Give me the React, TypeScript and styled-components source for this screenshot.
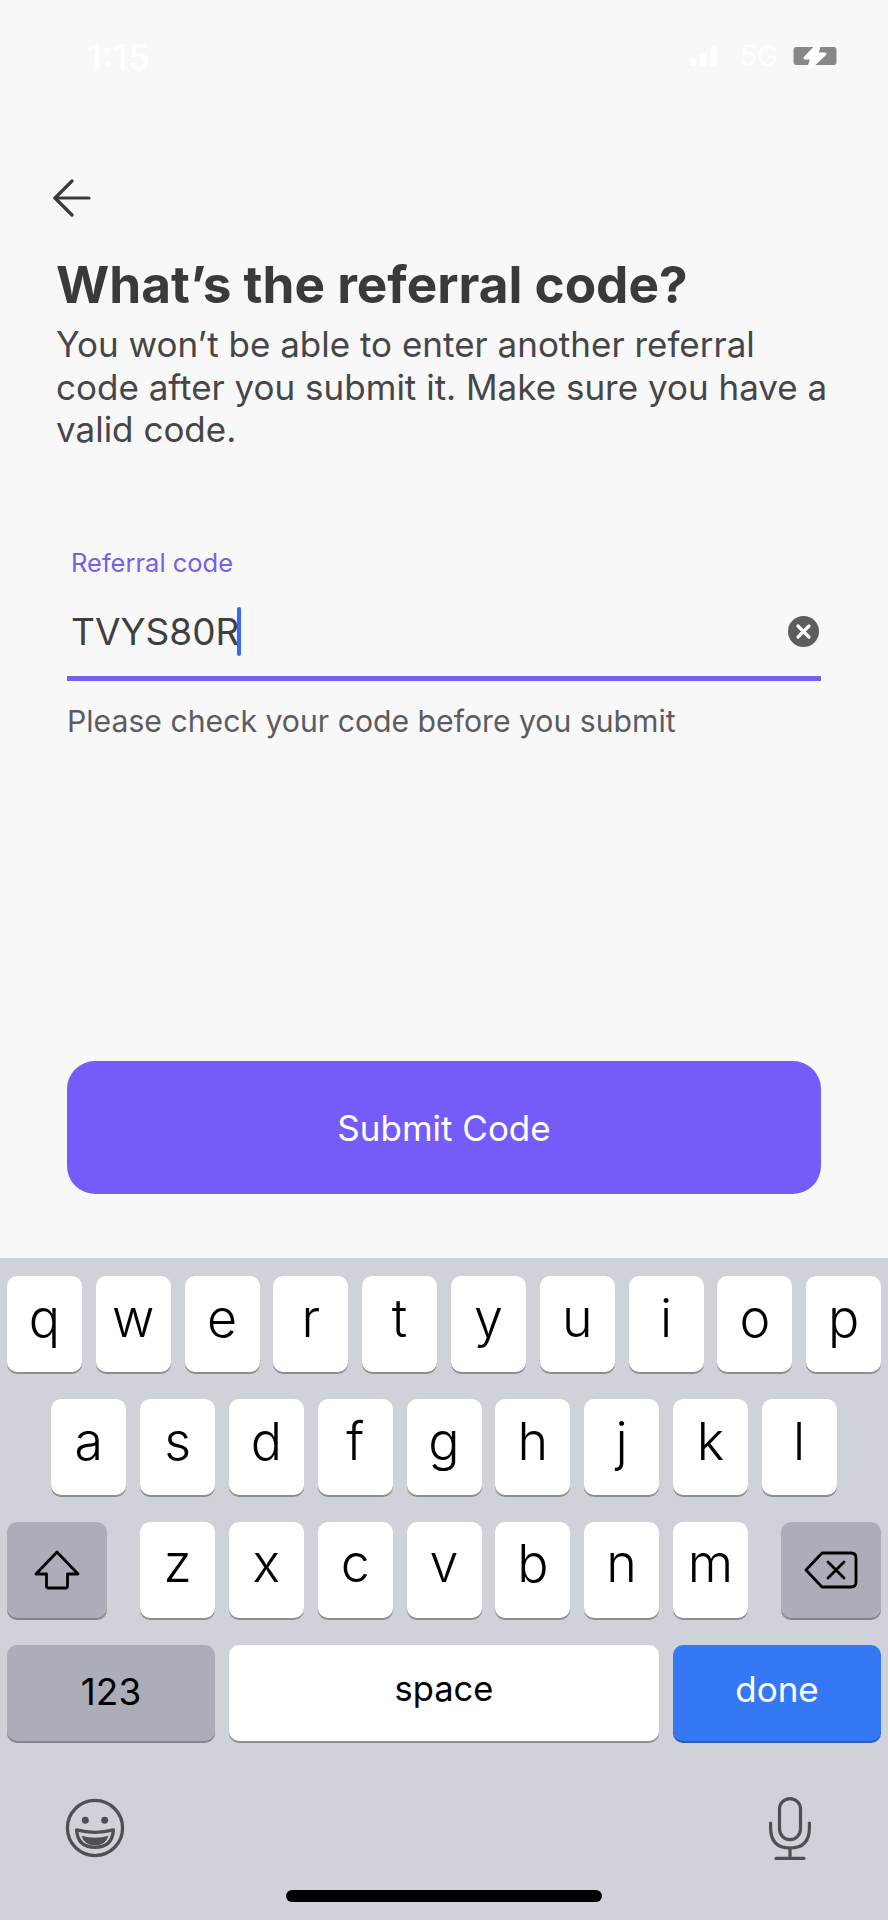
import React from "react";
import styled, { createGlobalStyle } from "styled-components";

const Global = createGlobalStyle`
  html, body { margin: 0; padding: 0; background: #f8f8f9; }
  * { box-sizing: border-box; }
`;

const Page = styled.div`
  width: 888px;
  height: 1920px;
  display: flex;
  flex-direction: column;
  overflow: hidden;
  background: #f8f8f9;
  font-family: Inter, "Liberation Sans", sans-serif;
`;

const StatusBar = styled.div`
  height: 112px;
  padding: 36px 51px 0 87px;
  display: flex;
  justify-content: space-between;
  align-items: flex-start;
  color: #ffffff;
`;
const Time = styled.span`
  font-size: 36px;
  line-height: 42px;
  font-weight: 500;
`;
const StatusIcons = styled.div`
  display: flex;
  align-items: center;
  gap: 20px;
  height: 40px;
`;
const NetLabel = styled.span`
  margin-right: -5px;
  font-size: 28px;
  font-weight: 400;
  line-height: 40px;
`;

const Main = styled.main`
  flex: 1;
  display: flex;
  flex-direction: column;
  padding: 67px 67px 64px;
`;
const BackButton = styled.div`
  margin-left: -14px;
  height: 38px;
  display: flex;
`;
const Title = styled.h1`
  margin: 36.5px 0 0 -11px;
  font-size: 51.3px;
  line-height: 60px;
  font-weight: 700;
  color: #3a3a3c;
  white-space: nowrap;
`;
const Subtitle = styled.p`
  margin: 9.5px 0 0 -11px;
  width: 778px;
  font-size: 35px;
  line-height: 42.5px;
  font-weight: 400;
  color: #464648;
`;
const Field = styled.div`
  margin-top: 97px;
`;
const FieldLabel = styled.div`
  padding-left: 4px;
  font-size: 25.5px;
  line-height: 29px;
  color: #7560e6;
`;
const InputRow = styled.div`
  margin-top: 19px;
  height: 85.3px;
  border-bottom: 5px solid #7561e8;
  padding: 0 2px 8px 4px;
  display: flex;
  align-items: center;
  justify-content: space-between;
`;
const InputValue = styled.div`
  display: flex;
  align-items: center;
  font-size: 37px;
  line-height: 48px;
  color: #3f3f41;
`;
const Caret = styled.span`
  width: 4px;
  height: 49px;
  margin-left: -2px;
  border-radius: 2px;
  background: #3b68f2;
`;
const Helper = styled.div`
  margin-top: 22px;
  font-size: 30.2px;
  line-height: 36px;
  color: #5c5c60;
`;
const Submit = styled.div`
  margin-top: auto;
  height: 133px;
  border-radius: 28px;
  background: #755cf8;
  color: #ffffff;
  font-size: 35px;
  display: flex;
  align-items: center;
  justify-content: center;
`;

const Keyboard = styled.div`
  height: 662px;
  background: #d0d2d9;
  padding: 18px 7px 0;
  display: flex;
  flex-direction: column;
  gap: 27px;
  position: relative;
  font-family: Inter, "Liberation Sans", sans-serif;
`;
const KeyRow = styled.div<{ $justify?: string }>`
  display: flex;
  height: 96px;
  gap: 13.8px;
  justify-content: ${(p) => p.$justify ?? "center"};
`;
const Letters = styled.div`
  display: flex;
  gap: 13.8px;
`;
const Key = styled.div<{ $w?: number; $bg?: string; $shadow?: string; $color?: string; $size?: number; $pb?: number; $weight?: number }>`
  width: ${(p) => p.$w ?? 75}px;
  height: 96px;
  flex: none;
  border-radius: 10px;
  background: ${(p) => p.$bg ?? "#ffffff"};
  box-shadow: 0 2px 0 ${(p) => p.$shadow ?? "#8d8e92"};
  color: ${(p) => p.$color ?? "#000000"};
  font-size: ${(p) => p.$size ?? 52}px;
  font-weight: ${(p) => p.$weight ?? 350};
  line-height: 1;
  display: flex;
  align-items: center;
  justify-content: center;
  padding-bottom: ${(p) => p.$pb ?? 10}px;
`;
const Accessory = styled.div`
  position: absolute;
  left: 0;
  right: 0;
  top: 538px;
  height: 64px;
  padding: 0 77px 0 65px;
  display: flex;
  align-items: center;
  justify-content: space-between;
`;
const HomeBar = styled.div`
  position: absolute;
  left: 286px;
  top: 632px;
  width: 316px;
  height: 12px;
  border-radius: 6px;
  background: #000000;
`;

const row1 = "qwertyuiop".split("");
const row2 = "asdfghjkl".split("");
const row3 = "zxcvbnm".split("");

export default function App() {
  return (
    <Page>
      <Global />
      <StatusBar>
        <Time>1:15</Time>
        <StatusIcons>
          <svg width="30" height="20" viewBox="0 0 30 20">
            <rect x="0" y="12" width="6" height="8" rx="1.5" fill="#fff" />
            <rect x="10" y="7" width="6" height="13" rx="1.5" fill="#fff" />
            <rect x="21" y="0" width="6" height="20" rx="1.5" fill="#fff" />
          </svg>
          <NetLabel>5G</NetLabel>
          <svg width="44" height="28" viewBox="0 0 44 28">
            <rect x="0.5" y="5" width="43" height="18" rx="3" fill="#888888" />
            <path d="M27 0 L12 16 H19 L15 28 L32 12 H24 Z" fill="#ffffff" stroke="#ffffff" strokeWidth="3" strokeLinejoin="round" />
          </svg>
        </StatusIcons>
      </StatusBar>
      <Main>
        <BackButton>
          <svg width="38" height="38" viewBox="0 0 38 38" fill="none" stroke="#3a3a3c" strokeWidth="3.2" strokeLinecap="round" strokeLinejoin="round">
            <path d="M36 19 H2" />
            <path d="M19 2 L2 19 L19 36" />
          </svg>
        </BackButton>
        <Title>What’s the referral code?</Title>
        <Subtitle>
          You won’t be able to enter another referral code after you submit it. Make sure you have a valid code.
        </Subtitle>
        <Field>
          <FieldLabel>Referral code</FieldLabel>
          <InputRow>
            <InputValue>
              TVYS80R
              <Caret />
            </InputValue>
            <svg width="31" height="31" viewBox="0 0 31 31">
              <circle cx="15.5" cy="15.5" r="15.5" fill="#5d5d60" />
              <path d="M10 10 L21 21 M21 10 L10 21" stroke="#ffffff" strokeWidth="3.2" strokeLinecap="round" />
            </svg>
          </InputRow>
          <Helper>Please check your code before you submit</Helper>
        </Field>
        <Submit>Submit Code</Submit>
      </Main>
      <Keyboard>
        <KeyRow>
          {row1.map((k) => (
            <Key key={k}>{k}</Key>
          ))}
        </KeyRow>
        <KeyRow>
          {row2.map((k) => (
            <Key key={k}>{k}</Key>
          ))}
        </KeyRow>
        <KeyRow $justify="space-between">
          <Key $w={100} $bg="#abaeb8" $shadow="#85868c" $pb={1}>
            <svg width="46" height="40" viewBox="0 0 46 40" fill="none" stroke="#000" strokeWidth="2.8" strokeLinejoin="round">
              <path d="M23 2 L44 24 H33.5 V36 Q33.5 38 31.5 38 H14.5 Q12.5 38 12.5 36 V24 H2 Z" />
            </svg>
          </Key>
          <Letters>
            {row3.map((k) => (
              <Key key={k} $pb={12}>{k}</Key>
            ))}
          </Letters>
          <Key $w={100} $bg="#abaeb8" $shadow="#85868c" $pb={1}>
            <svg width="54" height="38" viewBox="0 0 54 38" fill="none" stroke="#000" strokeWidth="2.8" strokeLinejoin="round" strokeLinecap="round">
              <path d="M18 2 H47 Q52 2 52 7 V31 Q52 36 47 36 H18 L2 19 Z" />
              <path d="M24 11 L40 27 M40 11 L24 27" />
            </svg>
          </Key>
        </KeyRow>
        <KeyRow $justify="space-between">
          <Key $w={208} $bg="#abaeb8" $shadow="#85868c" $size={37} $pb={3} $weight={400}>123</Key>
          <Key $w={430} $size={34.5} $pb={7} $weight={400}>space</Key>
          <Key $w={208} $bg="#3478f6" $shadow="#2a5cb8" $color="#ffffff" $size={35} $pb={7} $weight={400}>done</Key>
        </KeyRow>
        <Accessory>
          <svg width="60" height="62" viewBox="0 0 62 62" fill="none" stroke="#505054" strokeWidth="3.4">
            <circle cx="31" cy="31" r="28.5" />
            <circle cx="21" cy="23" r="3.6" fill="#505054" stroke="none" />
            <circle cx="41" cy="23" r="3.6" fill="#505054" stroke="none" />
            <path d="M12 33 Q31 38 50 33 Q49 51 31 51 Q13 51 12 33 Z" strokeLinejoin="round" />
            <path d="M17 39 Q31 43 45 39 Q42 49 31 49 Q20 49 17 39 Z" fill="#505054" stroke="none" />
          </svg>
          <svg width="42" height="63" viewBox="0 0 42 63" fill="none" stroke="#505054" strokeWidth="3.2" strokeLinecap="round">
            <rect x="10.5" y="1.6" width="21" height="41" rx="10.5" />
            <path d="M1.6 26 V31 Q1.6 51 21 51 Q40.4 51 40.4 31 V26" />
            <path d="M21 51 V61 M7 61.4 H35" />
          </svg>
        </Accessory>
        <HomeBar />
      </Keyboard>
    </Page>
  );
}
